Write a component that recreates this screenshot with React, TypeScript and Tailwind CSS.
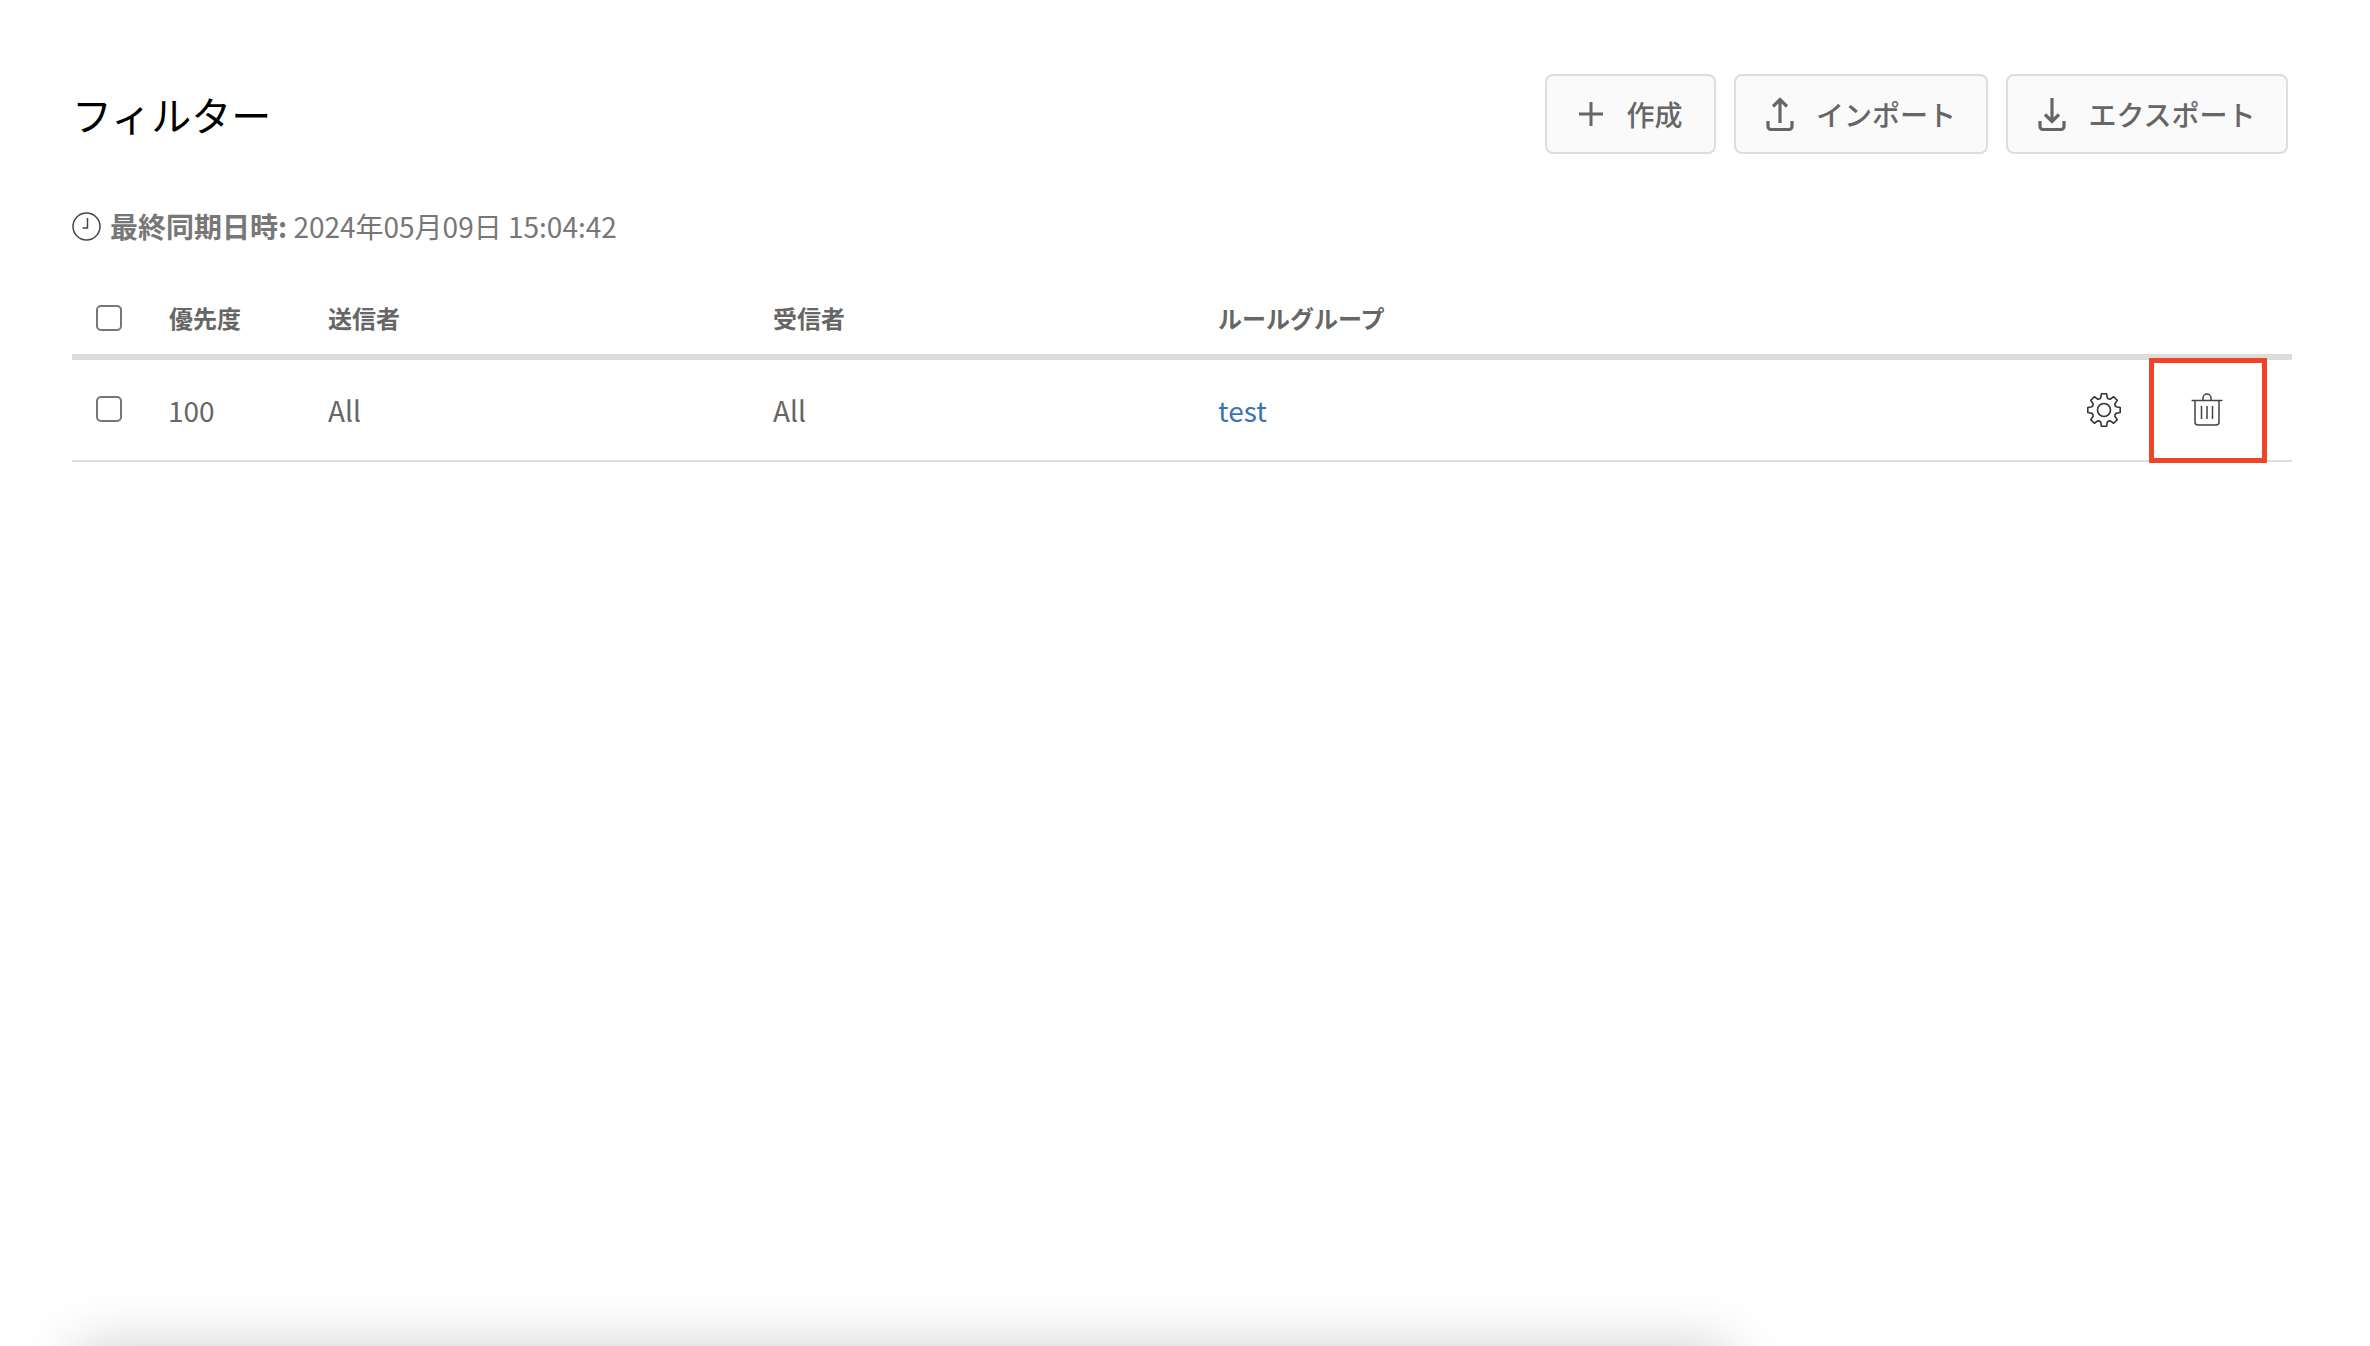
import React from "react";

function PlusIcon() {
  return (
    <svg width="26" height="26" viewBox="0 0 26 26" fill="none" stroke="#666" strokeWidth="3">
      <path d="M13 1v24M1 13h24" />
    </svg>
  );
}
function UploadIcon() {
  return (
    <svg width="28" height="34" viewBox="0 0 28 34" fill="none" stroke="#666" strokeWidth="3.2">
      <path d="M14 26V3M7 9.5l7-7 7 7" />
      <path d="M2 24v5.5a3 3 0 0 0 3 3h18a3 3 0 0 0 3-3V24" />
    </svg>
  );
}
function DownloadIcon() {
  return (
    <svg width="28" height="34" viewBox="0 0 28 34" fill="none" stroke="#666" strokeWidth="3.2">
      <path d="M14 1v23M7 17.5l7 7 7-7" />
      <path d="M2 24v5.5a3 3 0 0 0 3 3h18a3 3 0 0 0 3-3V24" />
    </svg>
  );
}
function ClockIcon() {
  return (
    <svg width="29" height="29" viewBox="0 0 29 29" fill="none" stroke="#444" strokeWidth="1.5">
      <circle cx="14.5" cy="14.5" r="13.5" />
      <path d="M15.5 6v10h-5" />
    </svg>
  );
}
function TrashIcon() {
  return (
    <svg width="32" height="33" viewBox="0 0 32 33" fill="none" stroke="#444" strokeWidth="1.5">
      <path d="M0.5 7.5h31" />
      <path d="M12 7.5V5a4 4 0 0 1 8 0v2.5" />
      <path d="M4 7.5V29a3 3 0 0 0 3 3h18a3 3 0 0 0 3-3V7.5" />
      <path d="M10.500 13v13M16 13v13M21.500 13v13" />
    </svg>
  );
}

const pt = (r: number, deg: number) => {
  const a = ((deg - 90) * Math.PI) / 180;
  return `${(18 + r * Math.cos(a)).toFixed(2)} ${(18 + r * Math.sin(a)).toFixed(2)}`;
};
const gearPath =
  Array.from({ length: 8 }, (_, i) => {
    const c = i * 45;
    return `${i === 0 ? "M" : "L"}${pt(12.6, c - 15)} L${pt(16.4, c - 9)} L${pt(16.4, c + 9)} L${pt(12.6, c + 15)} Q${pt(11.4, c + 22.5)} ${pt(12.6, c + 30)}`;
  }).join(" ") + " Z";

function GearIcon() {
  return (
    <svg width="36" height="36" viewBox="0 0 36 36" fill="none" stroke="#333" strokeWidth="1.6" strokeLinejoin="round">
      <path d={gearPath} />
      <circle cx="18" cy="18" r="6.500" />
    </svg>
  );
}

function Btn({ icon, label, w }: { icon: React.ReactNode; label: string; w: string }) {
  return (
    <button className={`flex h-[80px] items-center justify-center gap-[22px] rounded-[8px] border-[2px] border-[#dddddd] bg-[#fafafa] text-[28px] font-medium text-[#666666] ${w}`}>
      {icon}
      <span>{label}</span>
    </button>
  );
}

function Box() {
  return <span className="block h-[26px] w-[26px] rounded-[5px] border-[2px] border-[#777777] bg-white" />;
}

export default function App() {
  return (
    <div className="relative h-[1346px] w-full overflow-hidden bg-white font-['Noto_Sans_CJK_JP',sans-serif]">
      <div className="pl-[72px] pr-[78px] pt-[74px]">
        <div className="flex h-[80px] items-center justify-between pr-[4px]">
          <h1 className="text-[40px] font-normal text-black">フィルター</h1>
          <div className="flex gap-[18px]">
            <Btn icon={<PlusIcon />} label="作成" w="w-[171px]" />
            <Btn icon={<UploadIcon />} label="インポート" w="w-[254px]" />
            <Btn icon={<DownloadIcon />} label="エクスポート" w="w-[282px]" />
          </div>
        </div>
        <div className="mt-[54px] flex h-[36px] items-center gap-[9px] text-[28px] leading-[36px] text-[#777777]">
          <ClockIcon />
          <span><b className="font-bold">最終同期日時:</b> 2024年05月09日 15:04:42</span>
        </div>
        <div className="mt-[46px] flex h-[70px] items-center border-b-[6px] border-[#dddddd] pb-[8px] text-[24px] font-bold text-[#666666]">
          <div className="w-[97px] pl-[24px]"><Box /></div>
          <div className="w-[159px]">優先度</div>
          <div className="w-[445px]">送信者</div>
          <div className="w-[445px]">受信者</div>
          <div>ルールグループ</div>
        </div>
        <div className="flex h-[102px] items-center border-b-[2px] border-[#dddddd] text-[28px] text-[#666666]">
          <div className="mb-[2px] w-[96px] pl-[24px]"><Box /></div>
          <div className="w-[160px]">100</div>
          <div className="w-[445px]">All</div>
          <div className="w-[445px]">All</div>
          <div className="flex-1 text-[#3b73b5]">test</div>
          <div className="flex h-full w-[91px] items-center justify-center">
            <GearIcon />
          </div>
          <div className="mr-[25px] mt-[1px] flex h-[105px] w-[118px] shrink-0 items-center justify-center border-[5px] border-[#ee4528] pb-[2px] pr-[2px]">
            <TrashIcon />
          </div>
        </div>
      </div>
      <div className="absolute left-[75px] top-[1350px] h-[60px] w-[1655px] shadow-[0_0_60px_rgba(0,0,0,0.22)]" />
    </div>
  );
}
